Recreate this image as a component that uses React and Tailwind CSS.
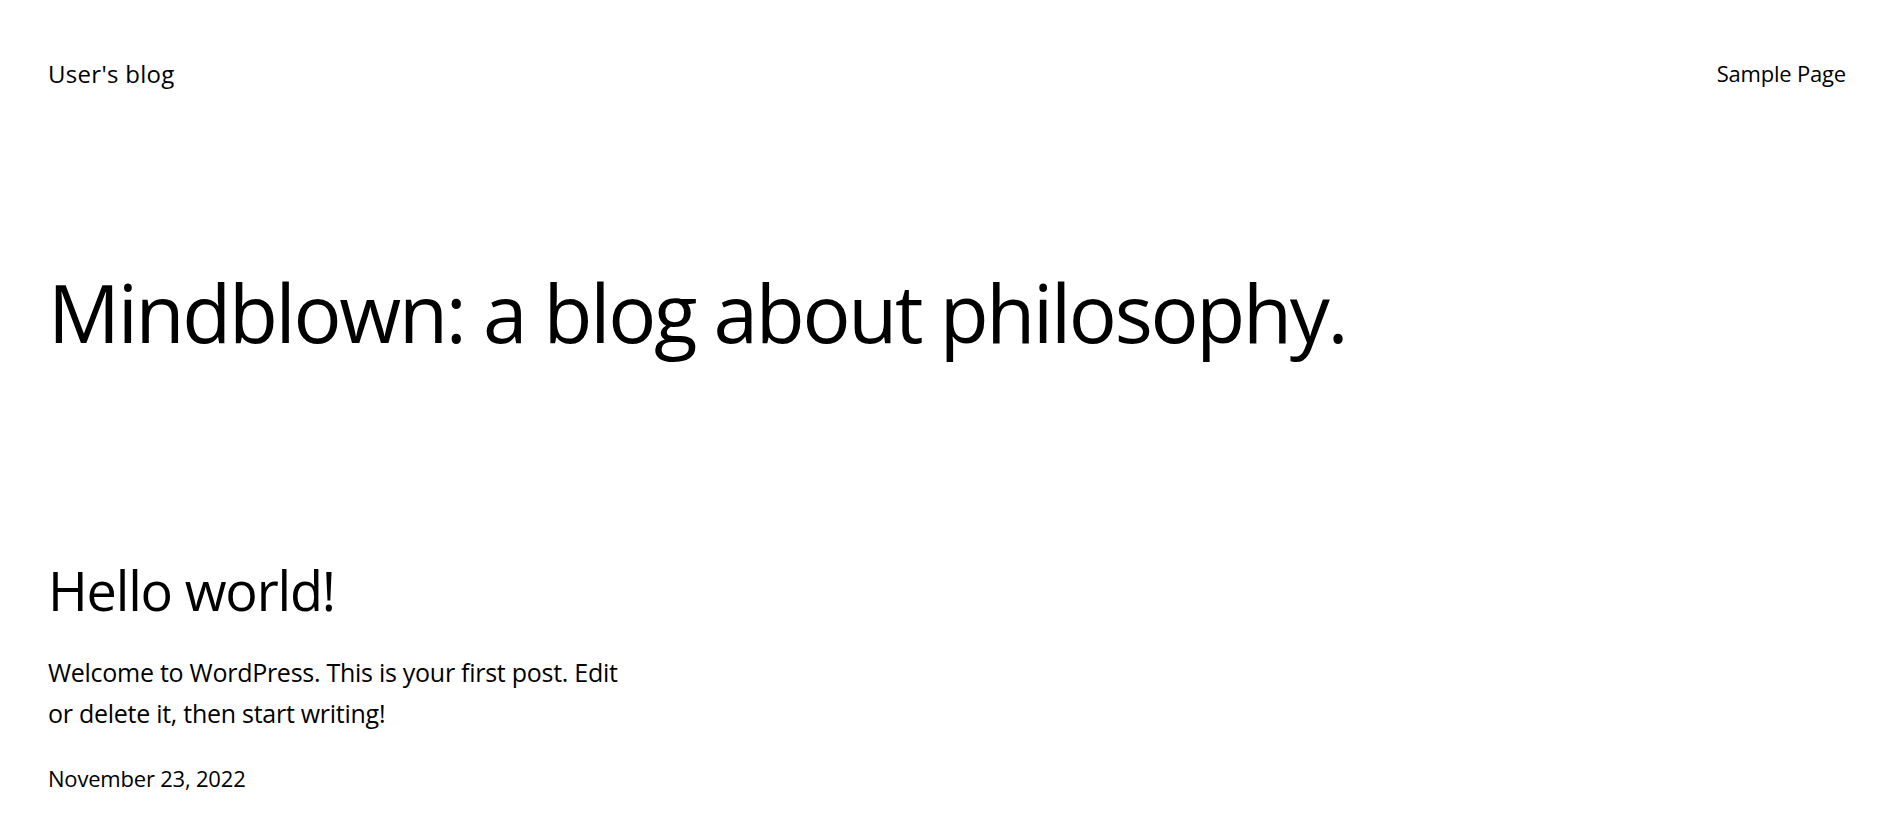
export default function App() {
  return (
    <div className="min-h-screen bg-white text-black" style={{ fontFamily: '"Open Sans", "Noto Sans", sans-serif' }}>
      <header className="flex items-start justify-between pl-[48px] pr-[45px] pt-[62px]">
        <a className="text-[24px] leading-[24px] tracking-[0.3px]">User's blog</a>
        <nav className="text-[22px] leading-[22px] tracking-[-0.2px]">Sample Page</nav>
      </header>
      <main className="pl-[48px]">
        <h1 className="mt-[186px] text-[80px] leading-[80px] tracking-[-2.3px]">Mindblown: a blog about philosophy.</h1>
        <h2 className="mt-[211px] text-[54px] leading-[54px] tracking-[-1.2px]">Hello world!</h2>
        <p className="mt-[35px] w-[630px] text-[25px] leading-[41px] tracking-[-0.27px]">
          <span className="block">Welcome to WordPress. This is your first post. Edit</span>
          <span className="block">or delete it, then start writing!</span>
        </p>
        <div className="mt-[33px] text-[22px] leading-[22px] tracking-[-0.2px]">November 23, 2022</div>
      </main>
    </div>
  );
}
